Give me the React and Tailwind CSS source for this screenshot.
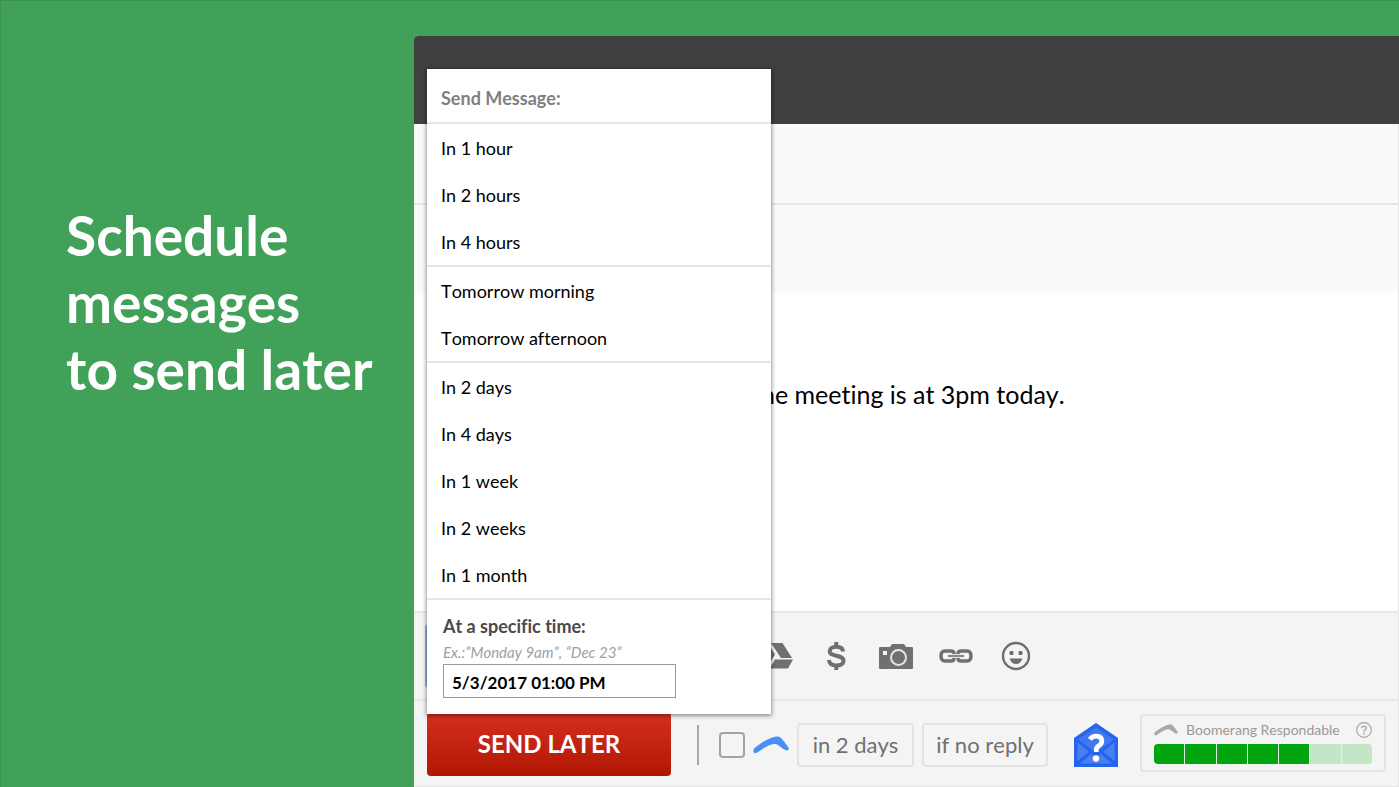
import { useState } from 'react'

const menuGroups = [
  ['In 1 hour', 'In 2 hours', 'In 4 hours'],
  ['Tomorrow morning', 'Tomorrow afternoon'],
  ['In 2 days', 'In 4 days', 'In 1 week', 'In 2 weeks', 'In 1 month'],
]

function DriveIcon() {
  return (
    <svg width="36" height="30" viewBox="0 0 36 30" fill="#707070" aria-hidden="true">
      <path d="M13 2h11.500l9.500 15H23z" />
      <path d="M11 4l6 9.500L8 28 2 19z" />
      <path d="M17 18.500H35L30 27.500H11.500z" />
    </svg>
  )
}

function DollarIcon() {
  return (
    <svg width="20" height="30" viewBox="0 0 20 30" fill="none" stroke="#707070" aria-hidden="true">
      <path
        d="M17.200 10.500C16.800 7.300 14 5.800 10.200 5.800 6.300 5.800 3.700 7.500 3.700 10.200c0 6.200 13.800 2.800 13.800 9.600 0 2.900-2.800 4.700-7 4.700-4.500 0-7.200-1.900-7.600-5.500"
        strokeWidth="4"
      />
      <path d="M10.300 1v4.500M10.300 24.500V29" strokeWidth="4" />
    </svg>
  )
}

function CameraIcon() {
  return (
    <svg width="34" height="28" viewBox="0 0 34 28" aria-hidden="true">
      <path fill="#707070" d="M1 5h10l2-3h12l2 3h6q1 0 1 1v20q0 1-1 1H1q-1 0-1-1V6q0-1 1-1z" />
      <rect x="4" y="9" width="4" height="4" fill="#f4f4f4" />
      <circle cx="19.500" cy="15.500" r="7.500" fill="none" stroke="#e4e4e4" strokeWidth="2" />
    </svg>
  )
}

function LinkIcon() {
  return (
    <svg width="34" height="14" viewBox="0 0 34 14" fill="none" stroke="#707070" aria-hidden="true">
      <path d="M15 5V4.500Q15 2 12 2H6Q2 2 2 7t4 5h6q3 0 3-2.500V9" strokeWidth="3.400" />
      <path d="M19 5V4.500Q19 2 22 2h6q4 0 4 5t-4 5h-6q-3 0-3-2.500V9" strokeWidth="3.400" />
      <path d="M9 7h16" strokeWidth="2.400" stroke="#8c8c8c" />
    </svg>
  )
}

function SmileIcon() {
  return (
    <svg width="30" height="30" viewBox="0 0 30 30" fill="#707070" aria-hidden="true">
      <circle cx="15" cy="15" r="13" fill="none" stroke="#707070" strokeWidth="2.400" />
      <rect x="8.500" y="10" width="4" height="4" rx="1" />
      <rect x="17.500" y="10" width="4" height="4" rx="1" />
      <path d="M8.500 17.500h13q-2 5.500-6.500 5.500t-6.500-5.500z" />
    </svg>
  )
}

function Boomerang({ className }) {
  return (
    <svg viewBox="0 0 36 18" className={className} fill="currentColor" aria-hidden="true">
      <path d="M.500 15.500C0 13.800 1 12.500 2.500 11.300 8 7 14.500 2.500 22 .700c2.600-.600 4.500-.300 6.300 1.500 2.700 2.800 5 5.900 7 9 .900 1.500.600 2.600-.800 3.100-1.400.400-2.600-.200-3.700-1-2.500-1.700-4.300-3.700-6.800-4.800-2.300-.900-4.500-.300-7 .600-4.500 1.700-9 5.200-13.200 7.600-1.500.800-2.900.300-3.300-1.200z" />
    </svg>
  )
}

function EnvelopeIcon() {
  return (
    <svg width="44" height="46" viewBox="0 0 44 46" aria-hidden="true">
      <path d="M22 1L44 16v29H0V16z" fill="#2464ee" />
      <path d="M22 5L40 17.500 22 31 4 17.500z" fill="#3f78f0" />
      <path d="M3.500 20.500L15 29.500 3.500 39zM40.500 20.500L29 29.500l11.500 9.500zM6 41.500l11.500-9.500 4.500 3 4.500-3L38 41.500z" fill="#4a80f0" />
      <path d="M16 17.500q2-3.500 6.500-3.300 5.300.300 5.300 4.800 0 2.900-2.800 4.600-2.700 1.700-2.700 4.400v2" fill="none" stroke="#fff" strokeWidth="4.800" />
      <circle cx="22" cy="36.500" r="3.200" fill="#fff" />
    </svg>
  )
}

function HelpIcon() {
  return (
    <svg width="16" height="16" viewBox="0 0 16 16" fill="none" stroke="#a3a3a3" aria-hidden="true">
      <circle cx="8" cy="8" r="7.300" strokeWidth="1.200" />
      <path d="M5.800 6.300q.200-2.200 2.300-2.200 2.200.100 2.200 1.900 0 1.100-1.200 1.800Q8 8.400 8 9.700" strokeWidth="1.400" />
      <circle cx="8" cy="11.700" r=".9" fill="#a3a3a3" stroke="none" />
    </svg>
  )
}

const tools = [
  { label: 'Insert from Drive', Icon: DriveIcon },
  { label: 'Send money', Icon: DollarIcon },
  { label: 'Insert photo', Icon: CameraIcon },
  { label: 'Insert link', Icon: LinkIcon },
  { label: 'Insert emoji', Icon: SmileIcon },
]

function SendMenu() {
  const [time, setTime] = useState('5/3/2017 01:00 PM')

  return (
    <div className="absolute bottom-[73px] left-[13px] w-[344px] bg-white text-[18px] text-black shadow-[0_1px_4px_1px_rgba(0,0,0,0.4)]">
      <h2 className="flex h-[53px] items-center px-3.5 pt-1.5 font-bold text-[#808080]">Send Message:</h2>
      {menuGroups.map((group) => (
        <ul key={group[0]} className="border-t-2 border-[#e6e6e6]">
          {group.map((item) => (
            <li key={item}>
              <button className="block h-[47px] w-full px-3.5 pt-0.5 text-left">{item}</button>
            </li>
          ))}
        </ul>
      ))}
      <div className="border-t-2 border-[#e6e6e6] px-4 pt-3 pb-4">
        <label htmlFor="send-time" className="block leading-7 font-bold text-[#4a4a4a]">
          At a specific time:
        </label>
        <p className="pt-0.5 pb-0.5 text-[15px] leading-5 text-[#a0a0a0] italic">Ex.:”Monday 9am”, “Dec 23”</p>
        <input
          id="send-time"
          value={time}
          onChange={(e) => setTime(e.target.value)}
          className="block h-[34px] w-[233px] border border-[#999] px-2 pt-0.5 text-[17px] font-bold text-black"
        />
      </div>
    </div>
  )
}

function Respondable({ score, total }) {
  return (
    <section className="mr-3 mb-0.5 ml-auto w-[246px] rounded-sm border-2 border-[#e3e3e3] px-3 pt-1.5 pb-1.5">
      <div className="flex h-4 items-center text-[14px] text-[#999]">
        <Boomerang className="h-3 w-6 text-[#aaa]" />
        <h3 className="ml-2">Boomerang Respondable</h3>
        <button aria-label="About Respondable" className="ml-auto">
          <HelpIcon />
        </button>
      </div>
      <div className="mt-1.5 flex h-5 gap-px overflow-hidden rounded-sm bg-[#e4f2e4]">
        {Array.from({ length: total }, (_, i) => (
          <span key={i} className={i < score ? 'flex-1 bg-[#00a510]' : 'flex-1 bg-[#c5e5c7]'} />
        ))}
      </div>
    </section>
  )
}

export default function App() {
  const [remind, setRemind] = useState(false)

  return (
    <div className="flex min-h-screen border-t border-l border-[#3b9350] bg-[#41a158] font-['Lato',sans-serif] [font-kerning:none] [font-variant-ligatures:none]">
      <aside className="w-[413px] shrink-0 pt-[201px] pl-[65px]">
        <h1 className="text-[55px] leading-[67px] font-bold text-white">
          Schedule
          <br />
          messages
          <br />
          to send later
        </h1>
      </aside>

      <main className="relative mt-[35px] flex min-w-0 flex-1 flex-col rounded-tl bg-white">
        <header className="h-[88px] rounded-tl bg-[#404040]" />
        <div className="h-[81px] border-r border-b-2 border-[#e6e6e6] bg-[#fafafa]" />
        <div className="h-[88px] border-r border-[#e6e6e6] bg-[#fafafa]" />

        <div className="flex-1 border-r border-[#e6e6e6] pt-[83px] pl-[338px]">
          <p className="text-[25px] leading-9 whitespace-nowrap text-black">the meeting is at 3pm today.</p>
        </div>

        <div className="flex h-[88px] items-center border-t-2 border-r border-[#e8e8e8] bg-[#f4f4f4] pl-[11px]">
          <button aria-label="Formatting options" className="h-16 w-[60px] rounded-sm bg-[#8fb0dc]" />
          <div className="ml-[261px] flex">
            {tools.map(({ label, Icon }) => (
              <button key={label} aria-label={label} className="flex h-10 w-[60px] items-center justify-center">
                <Icon />
              </button>
            ))}
          </div>
        </div>

        <footer className="flex h-[88px] items-center border-t-2 border-r border-b border-[#e8e8e8] bg-[#f4f4f4] pl-[13px]">
          <button className="h-16 w-[244px] shrink-0 rounded-sm bg-linear-to-b from-[#d5301f] to-[#b11500] text-[24px] font-bold text-white">
            SEND LATER
          </button>
          <div className="ml-[26px] flex items-center pt-0.5">
            <span className="h-10 w-0.5 bg-[#aaa]" />
            <input
              type="checkbox"
              aria-label="Boomerang this message"
              checked={remind}
              onChange={(e) => setRemind(e.target.checked)}
              className="ml-5 size-[26px] appearance-none rounded border-2 border-[#a3a3a3] checked:bg-[#4a8ff5]"
            />
            <Boomerang className="ml-2 h-[18px] w-9 text-[#4a8ff5]" />
            <button className="ml-2 h-11 w-[117px] rounded-sm border-2 border-[#e3e3e3] text-[22px] text-[#707070]">
              in 2 days
            </button>
            <button className="ml-2 h-11 w-[126px] rounded-sm border-2 border-[#e3e3e3] text-[22px] text-[#707070]">
              if no reply
            </button>
            <button aria-label="Ask Respondable" className="ml-[26px]">
              <EnvelopeIcon />
            </button>
          </div>
          <Respondable score={5} total={7} />
        </footer>

        <SendMenu />
      </main>
    </div>
  )
}
